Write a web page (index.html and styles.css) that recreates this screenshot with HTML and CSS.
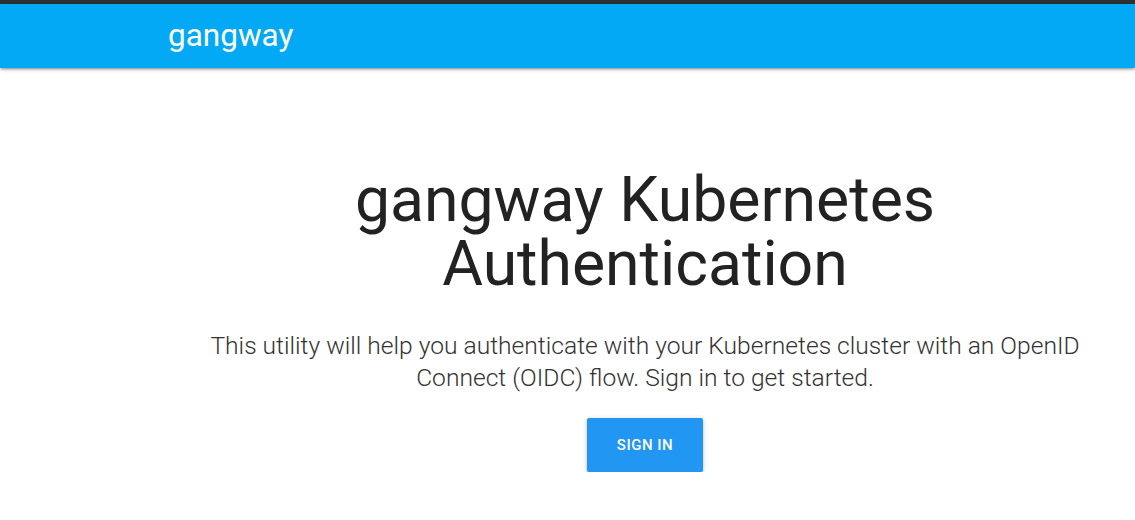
FILE: index.html
```html
<!DOCTYPE html>
<html>
<head>
<meta charset="utf-8">
<link rel="stylesheet" href="styles.css">
</head>
<body>
<div class="topstrip"></div>
<nav class="nav">
  <div class="nav-inner"><span class="brand">gangway</span></div>
</nav>
<main class="main">
  <div class="col">
    <h2 class="title">gangway Kubernetes Authentication</h2>
    <p class="lead">This utility will help you authenticate with your Kubernetes cluster with an OpenID Connect (OIDC) flow. Sign in to get started.</p>
    <div class="actions"><a class="btn">SIGN IN</a></div>
  </div>
</main>
</body>
</html>
```
FILE: styles.css
```css
html, body { margin: 0; padding: 0; background: #fff; font-family: Roboto, "Liberation Sans", sans-serif; }
.topstrip { height: 4px; background: #2f3233; }
.nav { height: 64px; background: #03a9f4; box-shadow: 0 2px 2px 0 rgba(0,0,0,.14), 0 3px 1px -2px rgba(0,0,0,.12), 0 1px 5px 0 rgba(0,0,0,.2); position: relative; }
.nav-inner { padding-left: 168px; height: 64px; display: flex; align-items: center; }
.brand { color: #fff; font-size: 31.5px; line-height: 64px; }
.main { display: flex; }
.col { margin-left: 195px; width: 900px; text-align: center; }
.title { font-size: 62.5px; font-weight: 400; line-height: 64px; color: #222; margin: 100px 0 0; }
.lead { font-size: 24.6px; font-weight: 300; line-height: 32px; color: #333; margin: 34px 0 0; }
.actions { margin-top: 24px; }
.btn { display: inline-block; height: 54px; line-height: 54px; padding: 0 30px; background: #2196f3; color: #fff; font-size: 15px; font-weight: 500; letter-spacing: .5px; border-radius: 2px; box-shadow: 0 2px 2px 0 rgba(0,0,0,.14), 0 3px 1px -2px rgba(0,0,0,.12), 0 1px 5px 0 rgba(0,0,0,.2); }
```
